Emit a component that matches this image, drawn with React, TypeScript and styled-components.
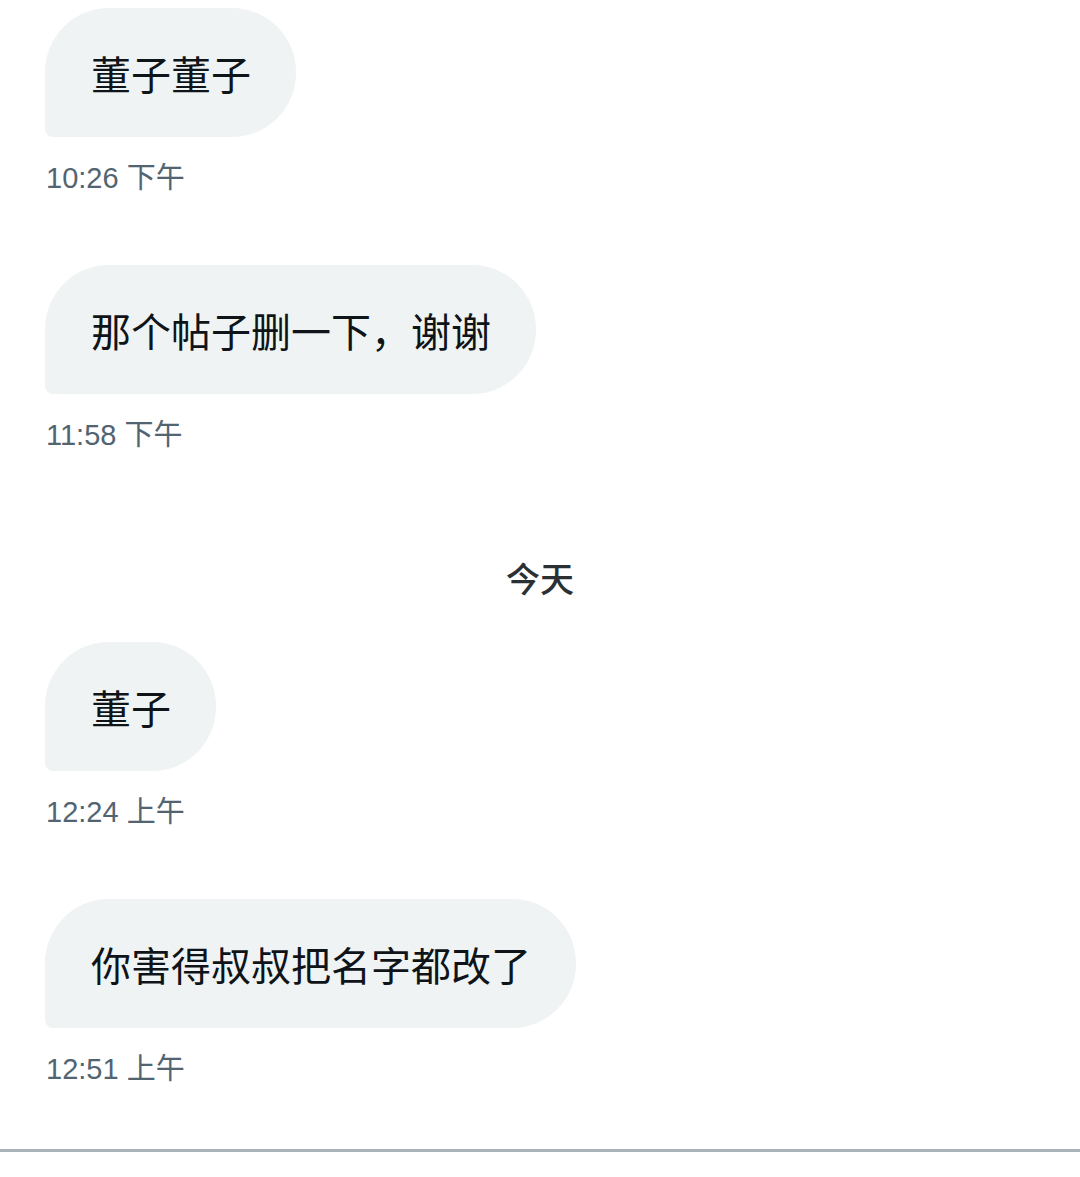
import React from 'react';
import styled, { createGlobalStyle } from 'styled-components';

const GlobalStyle = createGlobalStyle`
  html, body {
    margin: 0;
    padding: 0;
    background: #ffffff;
  }
  body {
    font-family: "Liberation Sans", "Noto Sans CJK SC", sans-serif;
  }
`;

const Page = styled.div`
  width: 1080px;
  height: 1177px;
  background: #ffffff;
  display: flex;
  flex-direction: column;
  overflow: hidden;
`;

const Thread = styled.div`
  display: flex;
  flex-direction: column;
  align-items: flex-start;
  padding: 8px 45px 0;
`;

const Group = styled.div<{ $gapAfter: number }>`
  display: flex;
  flex-direction: column;
  align-items: flex-start;
  gap: 23px;
  margin-bottom: ${({ $gapAfter }) => $gapAfter}px;
`;

const Bubble = styled.div`
  box-sizing: border-box;
  height: 129px;
  display: flex;
  align-items: center;
  padding: 0 45px 0 46px;
  background: #eff3f4;
  color: #0f1419;
  font-family: "Noto Sans CJK SC", sans-serif;
  font-size: 40px;
  border-radius: 64px 64px 64px 8px;
  white-space: nowrap;
`;

const Time = styled.div`
  color: #536471;
  font-family: "Liberation Sans", "Noto Sans CJK SC", sans-serif;
  font-size: 29px;
  line-height: 36px;
  padding-left: 1px;
`;

const DayLabel = styled.div`
  align-self: stretch;
  text-align: center;
  color: #2b3033;
  font-family: "Noto Sans CJK SC", sans-serif;
  font-weight: 500;
  font-size: 34px;
  line-height: 40px;
  margin: 0 -45px 44px;
`;

const Divider = styled.div`
  margin-top: 62px;
  height: 3px;
  background: #aab4b8;
  width: 100%;
`;

interface Msg {
  text: string;
  time: string;
  gapAfter: number;
}

const before: Msg[] = [
  { text: '董子董子', time: '10:26 下午', gapAfter: 69 },
  { text: '那个帖子删一下，谢谢', time: '11:58 下午', gapAfter: 105 },
];

const today: Msg[] = [
  { text: '董子', time: '12:24 上午', gapAfter: 69 },
  { text: '你害得叔叔把名字都改了', time: '12:51 上午', gapAfter: 0 },
];

const Message: React.FC<Msg> = ({ text, time, gapAfter }) => (
  <Group $gapAfter={gapAfter}>
    <Bubble>{text}</Bubble>
    <Time>{time}</Time>
  </Group>
);

export default function App() {
  return (
    <Page>
      <GlobalStyle />
      <Thread>
        {before.map((m) => (
          <Message key={m.time} {...m} />
        ))}
        <DayLabel>今天</DayLabel>
        {today.map((m) => (
          <Message key={m.time} {...m} />
        ))}
      </Thread>
      <Divider />
    </Page>
  );
}
